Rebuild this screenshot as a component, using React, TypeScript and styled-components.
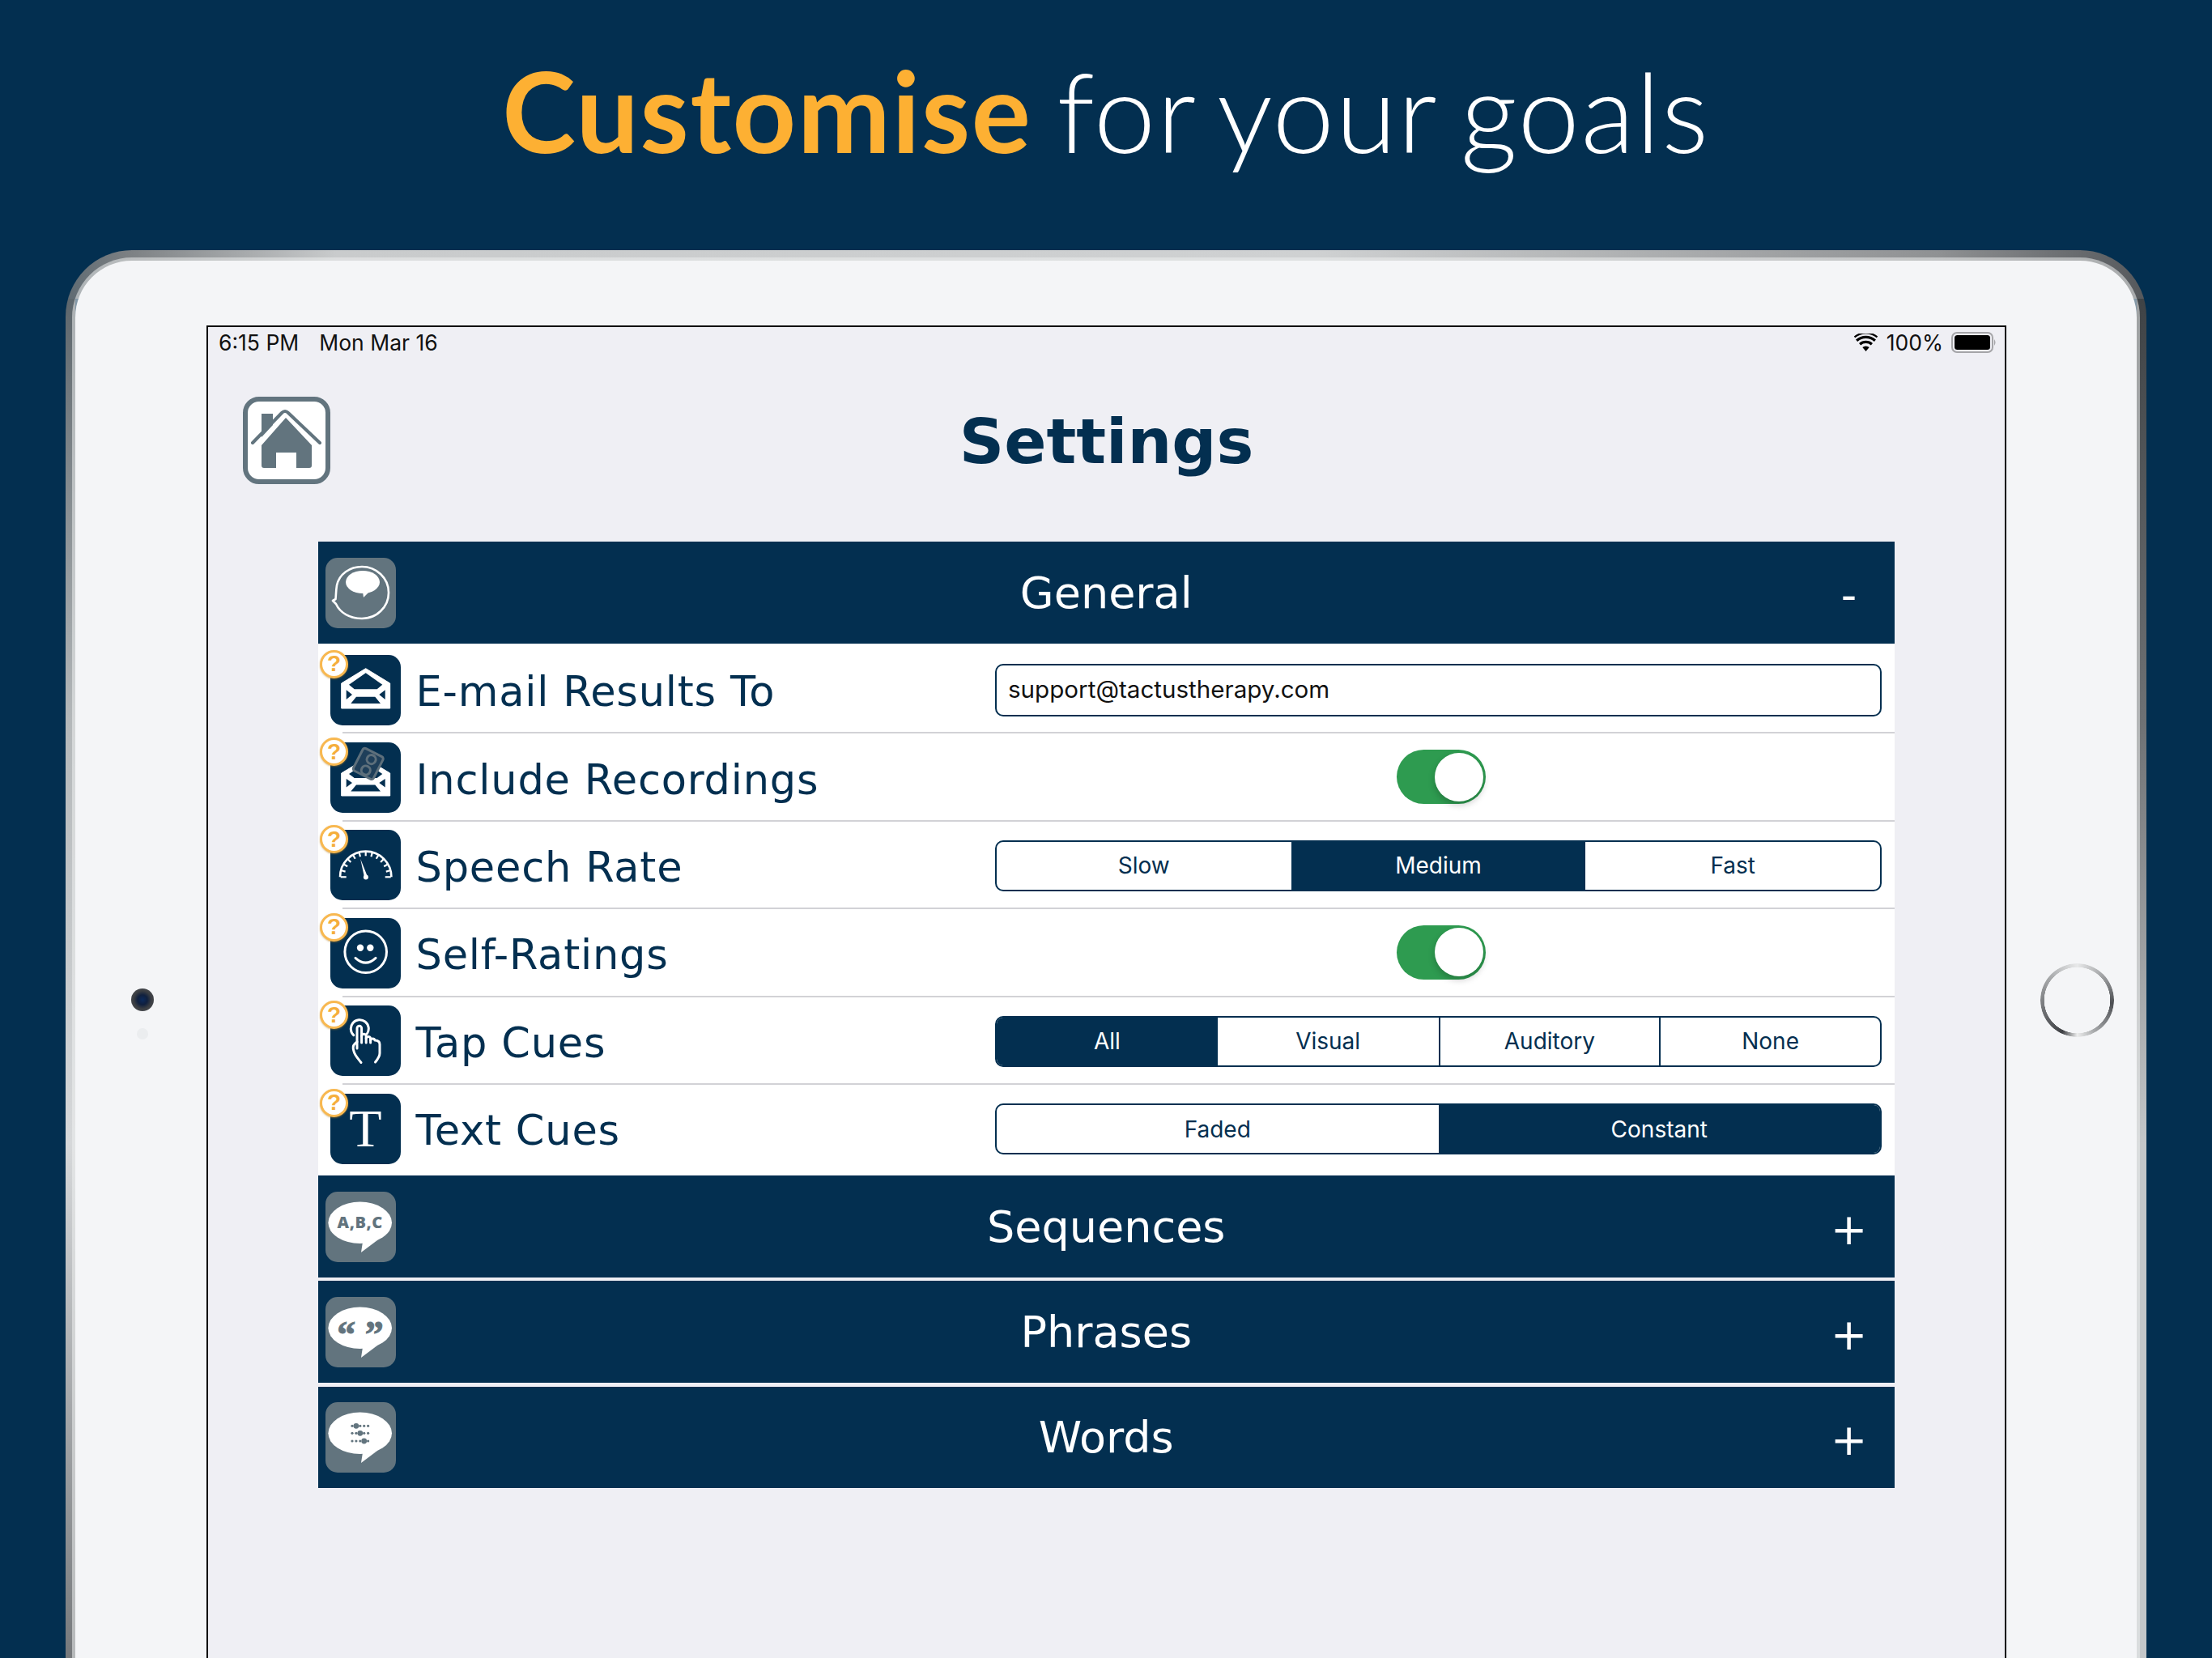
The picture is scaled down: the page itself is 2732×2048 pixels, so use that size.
import React from "react";
import styled, { createGlobalStyle } from "styled-components";

const NAVY = "#032f50";
const SLATE = "#62747e";

const GlobalStyle = createGlobalStyle`
  html, body {
    margin: 0;
    background: ${NAVY};
  }
`;

const Page = styled.div`
  width: 2732px;
  height: 2048px;
  overflow: hidden;
  background: ${NAVY};
  display: flex;
  flex-direction: column;
`;

const Headline = styled.h1`
  margin: 0;
  height: 309px;
  flex: none;
  padding-top: 61px;
  box-sizing: border-box;
  text-align: center;
  font-family: Lato, sans-serif;
  font-size: 137px;
  letter-spacing: 1.5px;
  word-spacing: -8px;
  line-height: 150px;
  font-weight: 300;
  color: #fff;

  strong {
    font-weight: 700;
    letter-spacing: 1.7px;
    color: #fdb033;
  }
`;

const Device = styled.div`
  margin-left: 81px;
  width: 2570px;
  flex: 1;
  min-height: 0;
  box-sizing: border-box;
  padding: 13px 12px 0;
  border-radius: 82px 82px 0 0;
  background:
    linear-gradient(90deg, #5f6a72 0, #7c8083 3%, #c9cbcc 13%, #cfd1d2 60%, #8f9193 90%, #55585c 100%) top / 100% 60px no-repeat,
    linear-gradient(180deg, #5d666c 0, #b4b8ba 30%, #d6d8da 60%, #6d7073 100%) left 60px / 12px 100% no-repeat,
    linear-gradient(180deg, #3f4346 0, #6e7174 30%, #c4c7c9 60%, #c4c7c9 100%) right 60px / 12px 100% no-repeat;
`;

const Bezel = styled.div`
  position: relative;
  height: 100%;
  box-sizing: border-box;
  padding: 80px 161px 0 162px;
  border-radius: 70px 70px 0 0;
  background: #f4f5f7;
  box-shadow: 0 0 0 4px rgba(236, 238, 239, 0.55);
`;

const Camera = styled.div`
  position: absolute;
  left: 69px;
  top: 899px;
  width: 28px;
  height: 28px;
  border-radius: 50%;
  background: radial-gradient(circle, #0c2a5c 0, #10203e 30%, #3a3d42 55%, #55585c 100%);

  &::after {
    content: "";
    position: absolute;
    left: 7px;
    top: 49px;
    width: 14px;
    height: 14px;
    border-radius: 50%;
    background: #ebedef;
  }
`;

const HomeRing = styled.div`
  position: absolute;
  left: 2427px;
  top: 868px;
  width: 91px;
  height: 91px;
  border-radius: 50%;
  background: conic-gradient(#e8e9ea 0deg, #9a9c9e 50deg, #4c4e52 95deg, #a5a7a9 150deg, #eceded 180deg, #3f4145 205deg, #77797c 260deg, #a8aaac 310deg, #e8e9ea 360deg);
  -webkit-mask: radial-gradient(circle, transparent 40.5px, #000 41px);
  mask: radial-gradient(circle, transparent 40.5px, #000 41px);
`;

const Screen = styled.div`
  height: 100%;
  box-sizing: border-box;
  border: 2px solid #000;
  border-bottom: none;
  background: #efeff4;
`;

const StatusBar = styled.div`
  height: 43px;
  padding: 0 10px 6px 13px;
  box-sizing: border-box;
  display: flex;
  align-items: center;
  justify-content: space-between;
  font-family: Inter, sans-serif;
  font-size: 26.5px;
  color: #111;
`;

const StatusGroup = styled.div<{ $gap: number }>`
  display: flex;
  align-items: center;
  gap: ${(p) => p.$gap}px;
`;

const TitleRow = styled.div`
  display: grid;
  grid-template-columns: 1fr auto 1fr;
  align-items: center;
  padding: 43px 43px 71px;
`;

const HomeButton = styled.div`
  width: 108px;
  height: 108px;
  box-sizing: border-box;
  border: 6px solid ${SLATE};
  border-radius: 20px;
  background: #fff;

  svg {
    display: block;
  }
`;

const Title = styled.h2`
  margin: 0;
  padding-top: 3px;
  font-family: "DejaVu Sans", Verdana, sans-serif;
  font-size: 77px;
  font-weight: 700;
  color: ${NAVY};
`;

const Panel = styled.div`
  margin-left: 135.5px;
  width: 1947.5px;
`;

const SectionHeader = styled.div<{ $open?: boolean }>`
  height: ${(p) => (p.$open ? 126 : 125.5)}px;
  margin-bottom: ${(p) => (p.$open ? 1 : 4.6)}px;
  display: grid;
  grid-template-columns: 116px 1fr 116px;
  align-items: center;
  background: ${NAVY};
  font-family: "DejaVu Sans", Verdana, sans-serif;
  font-size: 54px;
  color: #fff;
  text-align: center;
`;

const Sign = styled.span`
  padding: 7px 0 0 3px;
`;

const SectionIcon = styled.div`
  width: 87px;
  height: 87px;
  margin-left: 9px;
  border-radius: 15px;
  background: ${SLATE};
`;

const Rows = styled.div`
  padding: 2px 0 3px;
  margin-bottom: 1px;
  background: #fff;
`;

const Row = styled.div`
  position: relative;
  height: 108.4px;
  padding-left: 15.5px;
  display: grid;
  grid-template-columns: 87px 1fr 1095px;
  align-items: center;
  padding-right: 16px;
  box-sizing: border-box;

  &:not(:last-child)::after {
    content: "";
    position: absolute;
    left: 30px;
    right: 0;
    bottom: 0;
    height: 2px;
    background: #d2d2d6;
  }
`;

const RowIcon = styled.div`
  position: relative;
  width: 87px;
  height: 87px;
  border-radius: 15px;
  background: ${NAVY};
`;

const TextGlyph = styled.div`
  height: 100%;
  display: flex;
  align-items: center;
  justify-content: center;
  font-family: "Liberation Serif", serif;
  font-size: 66px;
  color: #fff;
`;

const HelpBadge = styled.div`
  position: absolute;
  left: -13px;
  top: -6px;
  width: 35px;
  height: 35px;
  box-sizing: border-box;
  border: 3px solid #f8b850;
  border-radius: 50%;
  background: #fff;
  display: flex;
  align-items: center;
  justify-content: center;
  font-family: "Liberation Sans", sans-serif;
  font-size: 28px;
  font-weight: 700;
  color: #f5ae3c;
  box-shadow: 0 1px 2px rgba(180, 130, 40, 0.5);
`;

const RowLabel = styled.div`
  padding: 5px 0 0 18.5px;
  font-family: "DejaVu Sans", Verdana, sans-serif;
  font-size: 51px;
  letter-spacing: 0.8px;
  color: ${NAVY};
`;

const TextBox = styled.div`
  height: 65px;
  box-sizing: border-box;
  padding: 0 0 2px 14px;
  display: flex;
  align-items: center;
  border: 2.5px solid ${NAVY};
  border-radius: 10px;
  background: #fff;
  font-family: Inter, sans-serif;
  font-size: 29.6px;
  color: #111;
`;

const ToggleSlot = styled.div`
  display: flex;
  justify-content: center;
  padding-left: 7px;
  margin-top: -2px;
`;

const Toggle = styled.div`
  position: relative;
  width: 110px;
  height: 67px;
  border-radius: 34px;
  background: #2e9b50;
`;

const Knob = styled.div`
  position: absolute;
  right: 3px;
  top: 3.5px;
  width: 60px;
  height: 60px;
  border-radius: 50%;
  background: #fff;
  box-shadow: 0 4px 8px rgba(0, 0, 0, 0.22);
`;

const Segments = styled.div`
  height: 63px;
  margin-top: 1px;
  box-sizing: border-box;
  display: grid;
  grid-auto-flow: column;
  grid-auto-columns: 1fr;
  border: 2.5px solid ${NAVY};
  border-radius: 10px;
  overflow: hidden;
  background: #fff;
`;

const Segment = styled.div<{ $active?: boolean; $line?: boolean }>`
  display: flex;
  align-items: center;
  justify-content: center;
  font-family: Inter, sans-serif;
  font-size: 28px;
  color: ${(p) => (p.$active ? "#fff" : NAVY)};
  background: ${(p) => (p.$active ? NAVY : "transparent")};
  border-left: ${(p) => (p.$line ? `2px solid ${NAVY}` : "none")};
`;

const RoofIcon = () => (
  <svg width="96" height="96" viewBox="6 6 96 96">
    <path d="M23 21h14v14L23 50z" fill={SLATE} />
    <path d="M53 26 85 60V85a3 3 0 0 1-3 3H66V69H41V88H26a3 3 0 0 1-3-3V60z" fill={SLATE} />
    <path d="M12 57 48 20q4-4 8 0L95 57" fill="none" stroke={SLATE} strokeWidth="4" strokeLinecap="round" />
  </svg>
);

const Wifi = () => (
  <svg width="31" height="22" viewBox="0 0 30 22">
    <path d="M15 22l-4.2-5a6.4 6.4 0 0 1 8.4 0z" fill="#000" />
    <path d="M7.6 13.2a11 11 0 0 1 14.8 0" fill="none" stroke="#000" strokeWidth="3.2" />
    <path d="M3.6 8.8a17 17 0 0 1 22.8 0" fill="none" stroke="#000" strokeWidth="3.2" />
    <path d="M1 4.4a22 22 0 0 1 28 0" fill="none" stroke="#000" strokeWidth="2.2" />
  </svg>
);

const Battery = () => (
  <svg width="56" height="26" viewBox="0 0 56 26">
    <rect x="1" y="1" width="50" height="24" rx="6" fill="none" stroke="#a5a5a8" strokeWidth="2" />
    <rect x="4" y="4" width="44" height="18" rx="3.5" fill="#000" />
    <path d="M53 9q3 4 0 8z" fill="#a5a5a8" />
  </svg>
);

const ENVELOPE_HOLES =
  "M23 36.7 43.7 22.3 64.3 36.7 57.7 42.3H29.7zM19.7 43.3V55L27 49zM67.7 43.3V55L60.3 49zM25.3 60H62L55.3 51.7H32z";

const MailIcon = () => (
  <svg width="87" height="87" viewBox="0 0 87 87">
    <path d="M13.7 66V35L43.7 16.7 73.7 35V66z" fill="#fff" stroke="#fff" strokeLinejoin="round" strokeWidth="1" />
    <path d={ENVELOPE_HOLES} fill={NAVY} />
  </svg>
);

const MailTapeIcon = () => (
  <svg width="87" height="87" viewBox="0 0 87 87">
    <path d="M13.7 66V38L43.7 20 73.7 38V66z" fill="#fff" stroke="#fff" strokeLinejoin="round" strokeWidth="1" />
    <path d="M23 39 43.7 25 64.3 39 57.7 44H29.7zM19.7 45V55.5L27 50zM67.7 45V55.5L60.3 50zM25.3 60.5H62L55.3 52.5H32z" fill={NAVY} />
    <g transform="rotate(27 47 26)">
      <rect x="33" y="11" width="28" height="31" rx="3" fill="#1f3f5a" stroke="#5d6f7b" strokeWidth="3" />
      <circle cx="48" cy="20" r="5.5" fill="none" stroke="#5d6f7b" strokeWidth="3" />
      <circle cx="48" cy="35" r="5.5" fill="none" stroke="#5d6f7b" strokeWidth="3" />
    </g>
  </svg>
);

const GAUGE_TICKS = Array.from({ length: 13 }, (_, i) => 180 - i * 15);

const GaugeIcon = () => (
  <svg width="87" height="87" viewBox="0 0 87 87">
    <path d="M12 58.3a31.7 31.7 0 0 1 63.4 0" fill="none" stroke="#fff" strokeWidth="2.6" />
    {GAUGE_TICKS.map((deg) => {
      const r = (deg * Math.PI) / 180;
      const inner = deg === 180 || deg === 0 ? 24 : 26;
      return (
        <line
          key={deg}
          x1={43.7 + 31 * Math.cos(r)}
          y1={58.3 - 31 * Math.sin(r)}
          x2={43.7 + inner * Math.cos(r)}
          y2={58.3 - inner * Math.sin(r)}
          stroke="#fff"
          strokeWidth="2.2"
        />
      );
    })}
    <path d="M37.2 36 42 58.5 45.8 57.5z" fill="#fff" />
    <circle cx="43.9" cy="58.6" r="3" fill="#fff" />
  </svg>
);

const SmileIcon = () => (
  <svg width="87" height="87" viewBox="0 0 87 87">
    <circle cx="43.7" cy="41.7" r="25.8" fill="none" stroke="#fff" strokeWidth="3" />
    <circle cx="37" cy="36.7" r="4.2" fill="#fff" />
    <circle cx="49.3" cy="36.7" r="4.2" fill="#fff" />
    <path d="M31 49.3Q43.7 61 56 49.3" fill="none" stroke="#fff" strokeWidth="3" strokeLinecap="round" />
  </svg>
);

const HandIcon = () => (
  <svg width="87" height="87" viewBox="0 0 87 87" fill="none" stroke="#fff" strokeWidth="3" strokeLinecap="round" strokeLinejoin="round">
    <path d="M28.7 36.7A11 11 0 1 1 45.3 35" />
    <path d="M33 53V28a2.8 2.8 0 0 1 5.6 0V46" />
    <path d="M38.6 38a2.8 2.8 0 0 1 5.6 0v8" />
    <path d="M44.2 40.5a2.8 2.8 0 0 1 5.4 0V46" />
    <path d="M49.6 43a2.8 2.8 0 0 1 5.4 0c3 0 6 1 6 5v11c0 4-3 8-5.5 11" />
    <path d="M33 45 30 47.5c-2 2-2 6-1 9 1 5 6 10 9 14" />
  </svg>
);

const HeadIcon = () => (
  <svg width="87" height="87" viewBox="0 0 87 87">
    <path d="M13 57 9 53 12.5 51C13 46 13 40 14 34 17 20 30 11 45 11 63 11 78 25 78 43 78 61 63 75 45 75 30 75 18 68 13 57z" fill="none" stroke="#fff" strokeWidth="2.6" strokeLinejoin="round" />
    <ellipse cx="46" cy="30" rx="21" ry="14" fill="#fff" />
    <path d="M46 42 47 49 54 42z" fill="#fff" />
  </svg>
);

const Bubble = ({ children }: { children?: React.ReactNode }) => (
  <svg width="87" height="87" viewBox="0 0 87 87">
    <ellipse cx="42.7" cy="38.3" rx="39.3" ry="25.7" fill="#fff" />
    <path d="M46 62 44 75 64 60z" fill="#fff" />
    {children}
  </svg>
);

const BubbleText = styled.text`
  font-family: "Open Sans", sans-serif;
  font-weight: 800;
  font-size: 20px;
  letter-spacing: 0.6px;
  fill: ${SLATE};
  text-anchor: middle;
`;

const QuoteText = styled.text`
  font-family: "Liberation Serif", serif;
  font-weight: 700;
  font-size: 46px;
  fill: ${SLATE};
  stroke: ${SLATE};
  stroke-width: 1px;
  text-anchor: middle;
`;

const WORD_ROWS = [
  { y: 29.3, big: 1 },
  { y: 38.3, big: 2 },
  { y: 48, big: 3 },
];

const WordDots = () => (
  <>
    {WORD_ROWS.map((row) =>
      [0, 1, 2, 3, 4].map((i) => (
        <circle key={`${row.y}-${i}`} cx={33 + i * 4.9} cy={row.y} r={i === row.big ? 3.4 : 1.6} fill={SLATE} />
      ))
    )}
  </>
);

const Help = () => <HelpBadge>?</HelpBadge>;

const SETTINGS_ROWS: { label: string; icon: React.ReactNode; control: React.ReactNode }[] = [
  {
    label: "E-mail Results To",
    icon: <MailIcon />,
    control: <TextBox>support@tactustherapy.com</TextBox>,
  },
  {
    label: "Include Recordings",
    icon: <MailTapeIcon />,
    control: (
      <ToggleSlot>
        <Toggle>
          <Knob />
        </Toggle>
      </ToggleSlot>
    ),
  },
  {
    label: "Speech Rate",
    icon: <GaugeIcon />,
    control: (
      <Segments>
        <Segment>Slow</Segment>
        <Segment $active>Medium</Segment>
        <Segment>Fast</Segment>
      </Segments>
    ),
  },
  {
    label: "Self-Ratings",
    icon: <SmileIcon />,
    control: (
      <ToggleSlot>
        <Toggle>
          <Knob />
        </Toggle>
      </ToggleSlot>
    ),
  },
  {
    label: "Tap Cues",
    icon: <HandIcon />,
    control: (
      <Segments>
        <Segment $active>All</Segment>
        <Segment>Visual</Segment>
        <Segment $line>Auditory</Segment>
        <Segment $line>None</Segment>
      </Segments>
    ),
  },
  {
    label: "Text Cues",
    icon: <TextGlyph>T</TextGlyph>,
    control: (
      <Segments>
        <Segment>Faded</Segment>
        <Segment $active>Constant</Segment>
      </Segments>
    ),
  },
];

const App: React.FC = () => (
  <Page>
    <GlobalStyle />
    <Headline>
      <strong>Customise</strong> for your goals
    </Headline>
    <Device>
      <Bezel>
        <Camera />
        <HomeRing />
        <Screen>
          <StatusBar>
            <StatusGroup $gap={25}>
              <span>6:15 PM</span>
              <span>Mon Mar 16</span>
            </StatusGroup>
            <StatusGroup $gap={10}>
              <Wifi />
              <span>100%</span>
              <Battery />
            </StatusGroup>
          </StatusBar>
          <TitleRow>
            <HomeButton>
              <RoofIcon />
            </HomeButton>
            <Title>Settings</Title>
          </TitleRow>
          <Panel>
            <SectionHeader $open>
              <SectionIcon>
                <HeadIcon />
              </SectionIcon>
              <span>General</span>
              <Sign>-</Sign>
            </SectionHeader>
            <Rows>
              {SETTINGS_ROWS.map((row) => (
                <Row key={row.label}>
                  <RowIcon>
                    {row.icon}
                    <Help />
                  </RowIcon>
                  <RowLabel>{row.label}</RowLabel>
                  {row.control}
                </Row>
              ))}
            </Rows>
            <SectionHeader>
              <SectionIcon>
                <Bubble>
                  <BubbleText x="42.7" y="45">A,B,C</BubbleText>
                </Bubble>
              </SectionIcon>
              <span>Sequences</span>
              <Sign>+</Sign>
            </SectionHeader>
            <SectionHeader>
              <SectionIcon>
                <Bubble>
                  <QuoteText x="43" y="62">“ ”</QuoteText>
                </Bubble>
              </SectionIcon>
              <span>Phrases</span>
              <Sign>+</Sign>
            </SectionHeader>
            <SectionHeader>
              <SectionIcon>
                <Bubble>
                  <WordDots />
                </Bubble>
              </SectionIcon>
              <span>Words</span>
              <Sign>+</Sign>
            </SectionHeader>
          </Panel>
        </Screen>
      </Bezel>
    </Device>
  </Page>
);

export default App;
